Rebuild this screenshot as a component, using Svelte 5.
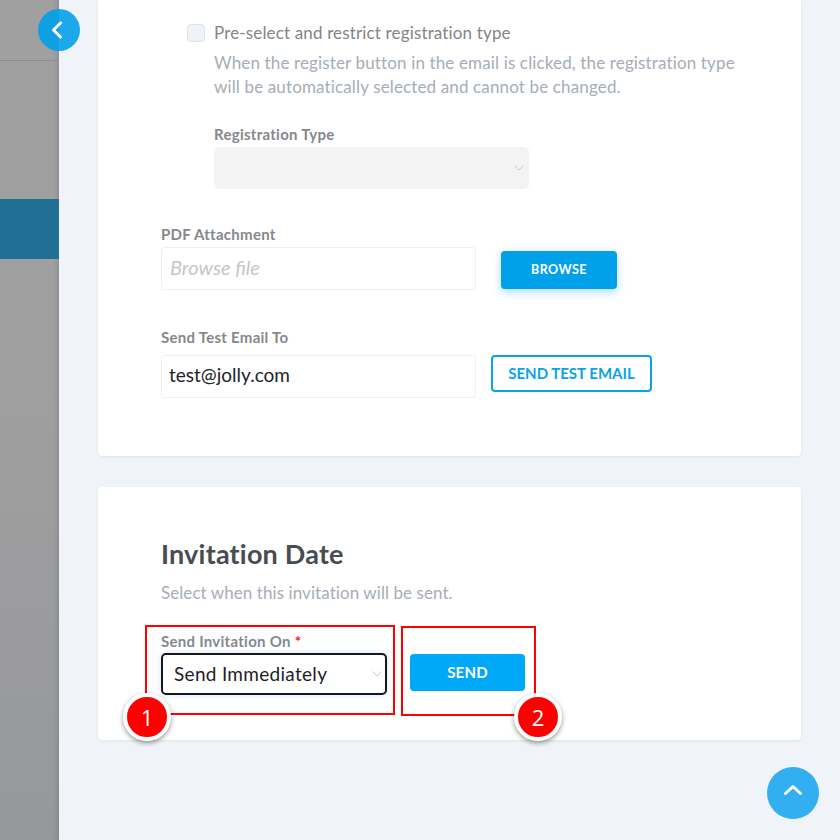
<script lang="ts">
	let email = 'test@jolly.com';
</script>

<div class="page">
	<aside class="backdrop">
		<div class="head"></div>
		<div class="active"></div>
	</aside>

	<main class="content">
		<section class="card first">
			<div class="restrict">
				<div class="check-row">
					<span class="checkbox"></span>
					<span>Pre-select and restrict registration type</span>
				</div>
				<p class="help">
					When the register button in the email is clicked, the registration type will be automatically selected and cannot be changed.
				</p>
				<div class="label reg-label">Registration Type</div>
				<div class="select disabled">
					<svg class="chev" width="10" height="6" viewBox="0 0 10 6"><path d="M.5.5 5 5 9.5.5" /></svg>
				</div>
			</div>

			<div class="label pdf-label">PDF Attachment</div>
			<div class="row pdf-row">
				<div class="input placeholder">Browse file</div>
				<button class="btn browse">BROWSE</button>
			</div>

			<div class="label test-label">Send Test Email To</div>
			<div class="row test-row">
				<div class="input">{email}</div>
				<button class="btn outline">SEND TEST EMAIL</button>
			</div>
		</section>

		<section class="card second">
			<h2>Invitation Date</h2>
			<p class="sub">Select when this invitation will be sent.</p>
			<div class="label on-label">Send Invitation On <span class="req">*</span></div>
			<div class="row on-row">
				<div class="select focus">
					Send Immediately
					<svg class="chev" width="10" height="6" viewBox="0 0 10 6"><path d="M.5.5 5 5 9.5.5" /></svg>
				</div>
				<button class="btn send">SEND</button>
			</div>
		</section>
	</main>

	<button class="round back" aria-label="Back">
		<svg width="14" height="20" viewBox="0 0 14 20"><path d="M10.5 3 3.5 10l7 7" /></svg>
	</button>
	<button class="round top" aria-label="Scroll to top">
		<svg width="20" height="12" viewBox="0 0 20 12"><path d="M2.5 9.5 10 2.5l7.5 7" /></svg>
	</button>

	<div class="mark one"></div>
	<div class="mark two"></div>
	<div class="badge b1">1</div>
	<div class="badge b2">2</div>
</div>

<style>
	:global(body) {
		margin: 0;
		background: #f0f3f8;
	}

	.page {
		position: relative;
		display: flex;
		width: 840px;
		height: 840px;
		overflow: hidden;
		font-family: Lato, 'Open Sans', sans-serif;
		background: #f0f3f8;
	}

	.backdrop {
		flex: 0 0 59px;
		display: flex;
		flex-direction: column;
		background: linear-gradient(180deg, #a0a0a0 0, #9f9f9f 400px, #97989c 840px);
		box-shadow: inset -6px 0 6px -6px rgba(0, 0, 0, 0.2);
	}

	.head {
		height: 60px;
		border-bottom: 1px solid #8c8c8c;
	}

	.active {
		height: 60px;
		margin-top: 138px;
		background: #216f95;
	}

	.content {
		flex: 0 0 703px;
		margin-left: 39px;
	}

	.card {
		box-sizing: border-box;
		padding-left: 63px;
		background: #fff;
		border-radius: 0 0 4px 4px;
		box-shadow: 0 1px 3px rgba(40, 60, 90, 0.08);
	}

	.first {
		height: 456px;
		padding-top: 21px;
	}

	.second {
		height: 253px;
		margin-top: 31px;
		padding-top: 51px;
		border-radius: 4px;
	}

	.restrict {
		padding-left: 26px;
	}

	.check-row {
		display: flex;
		align-items: center;
		gap: 9px;
		height: 23px;
		font-size: 17px;
		color: #858585;
		letter-spacing: 0.15px;
	}

	.checkbox {
		box-sizing: border-box;
		width: 18px;
		height: 18px;
		background: #eff3f8;
		border: 1px solid #dfe3ea;
		border-radius: 4px;
	}

	.help {
		width: 530px;
		margin: 7px 0 0 27px;
		font-size: 17px;
		line-height: 24px;
		color: #a5adb8;
		letter-spacing: 0.14px;
	}

	.label {
		font-size: 15px;
		font-weight: 700;
		line-height: 18px;
		color: #85888c;
		letter-spacing: 0.27px;
	}

	.reg-label {
		margin: 26px 0 4px 27px;
	}

	.select {
		position: relative;
		box-sizing: border-box;
		display: flex;
		align-items: center;
		height: 42px;
		border-radius: 5px;
	}

	.disabled {
		width: 315px;
		margin-left: 27px;
		background: #f3f3f4;
	}

	.chev {
		position: absolute;
		top: 18px;
		right: 5px;
	}

	.chev path {
		fill: none;
		stroke: #c8cbd0;
		stroke-width: 1;
	}

	.row {
		display: flex;
		align-items: flex-start;
	}

	.pdf-label {
		margin-top: 36px;
		margin-bottom: 4px;
	}

	.test-label {
		margin-top: 38px;
		margin-bottom: 9px;
	}

	.input {
		box-sizing: border-box;
		display: flex;
		align-items: center;
		width: 315px;
		height: 43px;
		padding: 0 0 4px 7px;
		font-size: 19px;
		color: #1f2328;
		background: #fff;
		border: 1px solid #eff0f2;
		border-radius: 3px;
	}

	.placeholder {
		padding-left: 8px;
		font-size: 20px;
		font-style: italic;
		color: #c6c6c6;
	}

	.btn {
		box-sizing: border-box;
		padding: 0;
		font-family: inherit;
		font-weight: 700;
		border-radius: 4px;
		border: 0;
		color: #fff;
	}

	.browse {
		width: 116px;
		height: 38px;
		margin: 4px 0 0 25px;
		padding-bottom: 1px;
		font-size: 12.5px;
		letter-spacing: 0.45px;
		background: #00a1e9;
		box-shadow: 0 3px 8px rgba(0, 161, 233, 0.35);
	}

	.outline {
		width: 161px;
		height: 37px;
		margin-left: 15px;
		padding-bottom: 2px;
		font-size: 15px;
		color: #0ba3e8;
		background: #fff;
		border: 2px solid #0ba3e8;
	}

	h2 {
		margin: 0;
		font-size: 27px;
		font-weight: 700;
		line-height: 32px;
		color: #484d52;
		letter-spacing: 0.2px;
	}

	.sub {
		margin: 11px 0 0;
		font-size: 17px;
		line-height: 24px;
		color: #a5adb8;
		letter-spacing: 0.07px;
	}

	.on-label {
		margin-top: 27px;
		margin-bottom: 3px;
	}

	.req {
		color: #f5103c;
	}

	.on-row {
		align-items: flex-start;
	}

	.focus {
		width: 226px;
		padding: 0 0 2px 11px;
		font-size: 19px;
		color: #1d2126;
		letter-spacing: 0.3px;
		background: #fff;
		border: 2px solid #16181b;
		box-shadow: 0 0 6px rgba(90, 150, 220, 0.25);
	}

	.focus .chev {
		top: 16px;
		right: 3px;
	}

	.send {
		width: 115px;
		height: 37px;
		margin: 1px 0 0 23px;
		padding-bottom: 2px;
		font-size: 15px;
		letter-spacing: 0.2px;
		background: #00a9f7;
	}

	.round {
		position: absolute;
		display: flex;
		align-items: center;
		justify-content: center;
		padding: 0;
		border: 0;
		border-radius: 50%;
	}

	.round path {
		fill: none;
		stroke: #fff;
		stroke-width: 3;
		stroke-linecap: round;
		stroke-linejoin: round;
	}

	.back {
		left: 38px;
		top: 9px;
		width: 42px;
		height: 42px;
		padding-right: 4px;
		background: linear-gradient(90deg, #0f9fe3 0, #0f9fe3 21px, #1ba8ec 21px);
	}

	.top {
		left: 767px;
		top: 767px;
		width: 52px;
		height: 52px;
		padding-bottom: 6px;
		background: #32aff0;
	}

	.mark {
		position: absolute;
		box-sizing: border-box;
		border: 2px solid #fe0000;
	}

	.one {
		left: 145px;
		top: 625px;
		width: 250px;
		height: 90px;
	}

	.two {
		left: 401px;
		top: 626px;
		width: 135px;
		height: 90px;
	}

	.badge {
		position: absolute;
		box-sizing: border-box;
		display: flex;
		align-items: center;
		justify-content: center;
		width: 48px;
		height: 48px;
		font-family: 'Open Sans', sans-serif;
		font-size: 22px;
		font-weight: 500;
		color: #fff;
		background: #fe0000;
		border: 4px solid #fff;
		border-radius: 50%;
		box-shadow: 0 2px 5px rgba(0, 0, 0, 0.4);
	}

	.b1 {
		left: 123px;
		top: 693px;
	}

	.b2 {
		left: 514px;
		top: 693px;
	}
</style>
